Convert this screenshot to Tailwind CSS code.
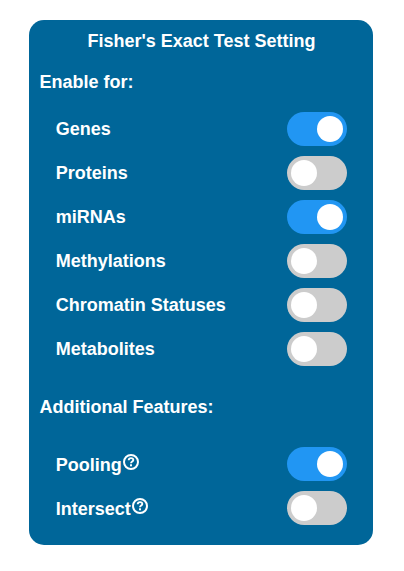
<!DOCTYPE html>
<html lang="en">
<head>
<meta charset="utf-8">
<title>Fisher's Exact Test Setting</title>
<script src="https://cdn.jsdelivr.net/npm/@tailwindcss/browser@4"></script>
</head>
<body class="bg-white pt-5 pl-[29px] font-['Liberation_Sans',Arial,sans-serif] text-[18px] font-bold text-white">
<main class="flex h-[525px] w-[344px] flex-col rounded-[15px] bg-[#006699] pl-[10.6px] pr-[11px] pt-[11px] leading-[21px]">
  <h1 class="pl-[1.4px] text-center">Fisher's Exact Test Setting</h1>
  <h2 class="mt-5">Enable for:</h2>
  <ul class="mt-[19px] flex flex-col gap-[10px] pl-[16.2px] pr-[15px]">
    <li class="flex h-[34px] items-center justify-between"><span>Genes</span><span class="flex h-[34px] w-[60px] items-center justify-end rounded-full bg-[#2196f3] px-1"><i class="size-[26px] rounded-full bg-white"></i></span></li>
    <li class="flex h-[34px] items-center justify-between"><span>Proteins</span><span class="flex h-[34px] w-[60px] items-center rounded-full bg-[#cccccc] px-1"><i class="size-[26px] rounded-full bg-white"></i></span></li>
    <li class="flex h-[34px] items-center justify-between"><span>miRNAs</span><span class="flex h-[34px] w-[60px] items-center justify-end rounded-full bg-[#2196f3] px-1"><i class="size-[26px] rounded-full bg-white"></i></span></li>
    <li class="flex h-[34px] items-center justify-between"><span>Methylations</span><span class="flex h-[34px] w-[60px] items-center rounded-full bg-[#cccccc] px-1"><i class="size-[26px] rounded-full bg-white"></i></span></li>
    <li class="flex h-[34px] items-center justify-between"><span>Chromatin Statuses</span><span class="flex h-[34px] w-[60px] items-center rounded-full bg-[#cccccc] px-1"><i class="size-[26px] rounded-full bg-white"></i></span></li>
    <li class="flex h-[34px] items-center justify-between"><span>Metabolites</span><span class="flex h-[34px] w-[60px] items-center rounded-full bg-[#cccccc] px-1"><i class="size-[26px] rounded-full bg-white"></i></span></li>
  </ul>
  <h2 class="mt-[31px]">Additional Features:</h2>
  <ul class="mt-[29px] flex flex-col gap-[10px] pl-[16.2px] pr-[15px]">
    <li class="flex h-[34px] items-center justify-between"><span class="flex pt-[2px]">Pooling<svg class="-mt-[1px] ml-[1.2px] size-4" viewBox="0 0 16 16" fill="none" stroke="currentColor"><circle cx="8" cy="8" r="7" stroke-width="2"/><path d="M5.700 6.200C5.800 3.400 10.300 3.500 10.300 6C10.300 7.500 8 7.600 8 9.300" stroke-width="1.9"/><rect x="7" y="10.300" width="2" height="2" fill="currentColor" stroke="none"/></svg></span><span class="flex h-[34px] w-[60px] items-center justify-end rounded-full bg-[#2196f3] px-1"><i class="size-[26px] rounded-full bg-white"></i></span></li>
    <li class="flex h-[34px] items-center justify-between"><span class="flex pt-[2px]">Intersect<svg class="-mt-[1px] ml-[1.2px] size-4" viewBox="0 0 16 16" fill="none" stroke="currentColor"><circle cx="8" cy="8" r="7" stroke-width="2"/><path d="M5.700 6.200C5.800 3.400 10.300 3.500 10.300 6C10.300 7.500 8 7.600 8 9.300" stroke-width="1.9"/><rect x="7" y="10.300" width="2" height="2" fill="currentColor" stroke="none"/></svg></span><span class="flex h-[34px] w-[60px] items-center rounded-full bg-[#cccccc] px-1"><i class="size-[26px] rounded-full bg-white"></i></span></li>
  </ul>
</main>
</body>
</html>
